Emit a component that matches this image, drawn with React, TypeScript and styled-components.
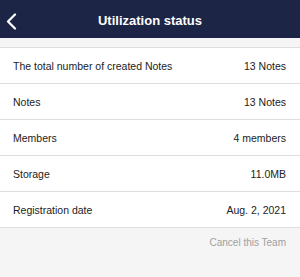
import React from "react";
import styled, { createGlobalStyle } from "styled-components";

const rows = [
  { label: "The total number of created Notes", value: "13 Notes" },
  { label: "Notes", value: "13 Notes" },
  { label: "Members", value: "4 members" },
  { label: "Storage", value: "11.0MB" },
  { label: "Registration date", value: "Aug. 2, 2021" },
];

const GlobalStyle = createGlobalStyle`
  body {
    margin: 0;
    background: #f5f5f5;
    font-family: "Liberation Sans", Arial, sans-serif;
  }
`;

const App = () => {
  return (
    <>
      <GlobalStyle />
      <Page>
        <Header>
          <BackButton aria-label="back">
            <svg width="11" height="17" viewBox="0 0 11 17">
              <path
                d="M9 1.5L2 8.5L9 15.5"
                fill="none"
                stroke="#fff"
                strokeWidth="2.2"
                strokeLinecap="round"
                strokeLinejoin="round"
              />
            </svg>
          </BackButton>
          <Title>Utilization status</Title>
        </Header>
        <List>
          {rows.map((row) => (
            <Row key={row.label}>
              <Label>{row.label}</Label>
              <Value>{row.value}</Value>
            </Row>
          ))}
        </List>
        <Footer>
          <CancelLink href="#">Cancel this Team</CancelLink>
        </Footer>
      </Page>
    </>
  );
};

export default App;

const Page = styled.div`
  width: 300px;
  min-height: 277px;
  background: #f5f5f5;
`;

const Header = styled.header`
  position: relative;
  height: 38px;
  box-sizing: border-box;
  padding-top: 3px;
  display: flex;
  align-items: center;
  justify-content: center;
  background-color: #1d2546;
`;

const BackButton = styled.button`
  position: absolute;
  left: 6px;
  top: 13px;
  padding: 0;
  border: none;
  background: none;
  display: flex;
`;

const Title = styled.h1`
  margin: 0;
  color: #fff;
  font-size: 13px;
  font-weight: 700;
`;

const List = styled.div`
  margin-top: 9px;
  background: #fff;
  border-top: 1px solid #dedede;
`;

const Row = styled.div`
  height: 35px;
  display: flex;
  align-items: center;
  justify-content: space-between;
  padding: 0 14px 0 13px;
  border-bottom: 1px solid #dedede;
  font-size: 10.5px;
  color: #222;
`;

const Label = styled.span``;

const Value = styled.span``;

const Footer = styled.div`
  display: flex;
  justify-content: flex-end;
  padding: 9px 14px 0 0;
`;

const CancelLink = styled.a`
  color: #a0a0a0;
  font-size: 10px;
  text-decoration: none;
`;
